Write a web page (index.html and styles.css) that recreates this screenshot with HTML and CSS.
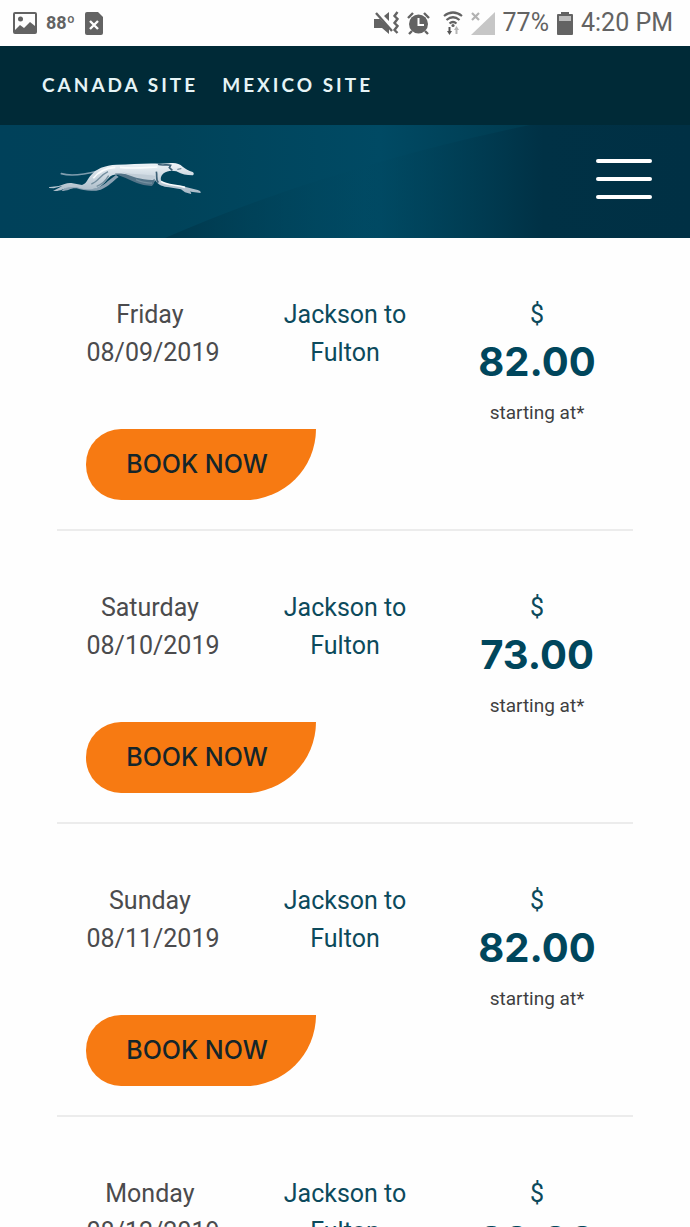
FILE: index.html
```html
<!DOCTYPE html>
<html lang="en">
<head>
<meta charset="utf-8">
<meta name="viewport" content="width=device-width, initial-scale=1">
<title>Fares from Jackson to Fulton</title>
<link rel="stylesheet" href="styles.css">
</head>
<body>
<div class="status">
  <div class="status-group">
    <svg class="icon-picture" width="24" height="22" viewBox="0 0 24 22" aria-hidden="true"><path fill="#636363" fill-rule="evenodd" d="M2 0h20q2 0 2 2v18q0 2-2 2H2q-2 0-2-2V2Q0 0 2 0zM2 2v16l5-5 4 3 6-6 5 4V2z"/><circle cx="7.500" cy="7" r="2.500" fill="#636363"/></svg>
    <span class="temperature">88º</span>
    <svg width="18" height="23" viewBox="0 0 18 23" aria-hidden="true"><path fill="#636363" d="M2 0h11l5 5v16q0 2-2 2H2q-2 0-2-2V2Q0 0 2 0z"/><path d="M5 9l8 8m0-8l-8 8" stroke="#fff" stroke-width="2.400"/></svg>
  </div>
  <div class="status-group status-right">
    <svg width="25" height="24" viewBox="0 0 25 24" aria-hidden="true"><path fill="#636363" d="M0 8h6l9 9v6l-7-6H0zM10 5l5-4v9z"/><path d="M2 2l16 18" stroke="#636363" stroke-width="2.400"/><path d="M23.500 1l-3 4 3 3-3 4 3 3-3 4 3 3" fill="none" stroke="#636363" stroke-width="2.400"/></svg>
    <svg class="icon-alarm" width="23" height="23" viewBox="0 0 23 23" aria-hidden="true"><circle cx="11.500" cy="12" r="9.500" fill="#636363"/><path d="M1 6l5-5M22 6l-5-5M5 19l-3 3M18 19l3 3" stroke="#636363" stroke-width="2.400"/><path d="M11.500 6v7H17" fill="none" stroke="#fff" stroke-width="2"/></svg>
    <svg class="icon-wifi" width="20" height="24" viewBox="0 0 20 24" aria-hidden="true"><g fill="none" stroke="#636363" stroke-width="2.200"><path d="M1 5q9-7 18 0M3.500 9q6.500-5.500 13 0M6.500 12.500q3.500-3 7 0"/></g><circle cx="10" cy="14.500" r="1.600" fill="#636363"/><path fill="#555" d="M5.500 16h2v4H9l-2.500 4L4 20h1.500z"/><path fill="#b5b5b5" d="M12.500 23h2v-4H16l-2.500-4-2.500 4h1.500z"/></svg>
    <svg class="icon-signal" width="24" height="23" viewBox="0 0 24 23" aria-hidden="true"><path fill="#c6c6c6" d="M24 0v23H0z"/><path d="M1 1l7 7m0-7L1 8" stroke="#b2b2b2" stroke-width="2.200"/></svg>
    <span class="status-text">77%</span>
    <svg width="16" height="23" viewBox="0 0 16 23" aria-hidden="true"><path fill="#636363" d="M4 0h8v2h3q1 0 1 1v19q0 1-1 1H1q-1 0-1-1V3q0-1 1-1h3z"/><path fill="#bdbdbd" d="M2 4h12v5H2z"/></svg>
    <span class="status-text">4:20 PM</span>
  </div>
</div>
<nav class="sites" aria-label="Country sites">
  <a href="#canada">CANADA SITE</a>
  <a href="#mexico">MEXICO SITE</a>
</nav>
<header class="masthead">
  <svg class="masthead-art" viewBox="0 0 690 112" preserveAspectRatio="none" aria-hidden="true">
    <defs>
      <linearGradient id="sweep"><stop offset="0" stop-color="#00374b" stop-opacity=".9"/><stop offset=".38" stop-color="#004962" stop-opacity=".2"/><stop offset=".72" stop-color="#003145"/><stop offset="1" stop-color="#003044"/></linearGradient>
    </defs>
    <path fill="url(#sweep)" d="M165 112C270 66 400 27 530 0H690V112z"/>
  </svg>
  <a class="logo" href="#home" aria-label="Home">
    <svg width="152" height="36" viewBox="25 30 456 108" aria-hidden="true">
      <defs>
        <linearGradient id="coat" gradientUnits="userSpaceOnUse" x1="0" y1="38" x2="0" y2="125"><stop offset="0" stop-color="#eef3f7"/><stop offset=".35" stop-color="#d3dde5"/><stop offset="1" stop-color="#a9bac7"/></linearGradient>
      </defs>
      <path d="M62 68C92 77 130 71 172 60" fill="none" stroke="#7f9dae" stroke-width="5" stroke-linecap="round"/>
      <path fill="#8ba2b3" d="M62 120c12-12 24-18 44-16l30 8c26 4 48-4 66-22l24-18 8 6c-18 12-28 28-54 38-22 6-50 4-72-4-18-2-24 8-46 8z"/>
      <path fill="url(#coat)" d="M28 108l26-3c16-4 26-11 42-8l28 5c14-4 16-16 24-26 18-24 44-33 80-35 46-1 86-5 128-3l28-1c18-3 32 0 42 10 8 7 18 11 30 16 5 3 4 9-1 10-18 0-30-3-48-12-14-4-28-2-38 6-9 8-12 19-4 27 18 10 48 8 70 14l36 9c8 3 11 6 8 9l-28-4-6-3c5 3 8 7 6 10l-18-5-12-9-36-6c-18-2-32-6-42-22-2 6-4 8-8 13-36 0-66-16-84-25-18-4-26-6-36-2-16 8-20 24-38 34-20 10-46 10-68 2l-26 0c-14 4-24 13-46 11l28-15-26 7-22-1z"/>
      <path fill="#547488" d="M222 68c30-2 64 8 104 10l16 6c1 10-4 18-9 21-36-2-56-14-78-24z"/>
      <path fill="#c1cdd7" d="M244 64c34 8 70 5 100 11l-6 12c-34 1-66-10-94-23z"/>
      <path d="M168 106c18-6 28-18 36-32M152 99c20-6 26-26 50-37M286 86c18 8 32 11 48 10" fill="none" stroke="#748f9f" stroke-width="4"/>
      <path d="M158 82c16-22 38-31 66-33M238 49c36 5 72 1 112-1M361 91c16 12 46 10 72 18" fill="none" stroke="#fafcfd" stroke-width="5"/>
      <path d="M352 40c14 5 26-1 38 3l-4 7 9 8M347 62c3 13-2 25 6 33" fill="none" stroke="#3d6076" stroke-width="5"/>
      <path d="M410 55l12-2" stroke="#526f82" stroke-width="3"/>
    </svg>
  </a>
  <button class="menu" type="button" aria-label="Open menu"><span></span><span></span><span></span></button>
</header>
<main class="fares">
  <ul class="fare-list">
    <li class="fare">
      <div class="fare-info">
        <div class="date">Friday&nbsp;<br>08/09/2019</div>
        <div class="route">Jackson to Fulton</div>
        <div class="price"><span class="currency">$</span><strong>82.00</strong><small>starting at*</small></div>
      </div>
      <button class="book" type="button">BOOK NOW</button>
    </li>
    <li class="fare">
      <div class="fare-info">
        <div class="date">Saturday&nbsp;<br>08/10/2019</div>
        <div class="route">Jackson to Fulton</div>
        <div class="price"><span class="currency">$</span><strong>73.00</strong><small>starting at*</small></div>
      </div>
      <button class="book" type="button">BOOK NOW</button>
    </li>
    <li class="fare">
      <div class="fare-info">
        <div class="date">Sunday&nbsp;<br>08/11/2019</div>
        <div class="route">Jackson to Fulton</div>
        <div class="price"><span class="currency">$</span><strong>82.00</strong><small>starting at*</small></div>
      </div>
      <button class="book" type="button">BOOK NOW</button>
    </li>
    <li class="fare">
      <div class="fare-info">
        <div class="date">Monday&nbsp;<br>08/12/2019</div>
        <div class="route">Jackson to Fulton</div>
        <div class="price"><span class="currency">$</span><strong>82.00</strong><small>starting at*</small></div>
      </div>
      <button class="book" type="button">BOOK NOW</button>
    </li>
  </ul>
</main>
</body>
</html>
```

FILE: styles.css
```css
* { box-sizing: border-box; }

body {
  display: flex;
  flex-direction: column;
  height: 100vh;
  margin: 0;
  background: #fefefe;
  color: #4b4b4d;
  font-family: Roboto, "Liberation Sans", sans-serif;
  font-size: 25px;
  line-height: 38px;
}

svg { display: block; flex: none; }

.status {
  display: flex;
  flex: none;
  align-items: center;
  justify-content: space-between;
  height: 46px;
  padding: 0 17px 0 13px;
  color: #636363;
}

.status-group { display: flex; align-items: center; gap: 8px; }
.temperature { margin: 0 2px 0 1px; font-size: 18px; font-weight: 700; }
.icon-wifi { margin-left: 5px; }
.status-text { font-size: 25px; white-space: nowrap; }

.sites {
  display: flex;
  flex: none;
  align-items: center;
  gap: 24px;
  height: 79px;
  padding: 0 42px 2px;
  background: #002a37;
}

.sites a {
  color: #e6f4f6;
  font-family: Lato, "Open Sans", sans-serif;
  font-size: 19px;
  font-weight: 700;
  letter-spacing: 3px;
  line-height: 24px;
  text-decoration: none;
}

.masthead {
  position: relative;
  display: flex;
  flex: none;
  align-items: center;
  justify-content: space-between;
  height: 113px;
  padding: 0 38px 6px 49px;
  background: linear-gradient(90deg, #00415a, #00435a 25%, #004a64 55%, #003c51 75%, #003246);
}

.masthead-art { position: absolute; inset: 0; width: 100%; height: 100%; }
.logo { position: relative; }

.menu {
  position: relative;
  display: flex;
  flex-direction: column;
  justify-content: space-between;
  width: 56px;
  height: 40px;
  padding: 0;
  border: 0;
  background: none;
}

.menu span { height: 4px; border-radius: 2px; background: #fff; }

.fares {
  flex: 1;
  min-height: 0;
  padding: 0 57px;
  overflow-y: auto;
  scrollbar-width: none;
}

.fare-list { margin: 0; padding: 0; list-style: none; }
.fare { padding: 58px 0 29px; border-bottom: 2px solid #ececec; }

.fare-info {
  display: grid;
  grid-template-columns: repeat(3, 1fr);
  margin-bottom: 4px;
  text-align: center;
}

.route { padding: 0 28px; color: #0c4a5c; }
.price { display: flex; flex-direction: column; }
.currency { color: #0c4a5c; }

.price strong {
  color: #00465c;
  font-family: Inter, "Open Sans", sans-serif;
  font-size: 40px;
  font-weight: 700;
  line-height: 56px;
}

.price small { margin-top: 11px; font-size: 19px; line-height: 24px; color: #3f3f41; }

.book {
  display: block;
  width: 230px;
  height: 71px;
  margin-left: 29px;
  padding: 0 8px 2px 0;
  border: 0;
  border-radius: 35px 0 71px 35px;
  background: #f77a12;
  color: #14252a;
  font-family: Inter, "Open Sans", sans-serif;
  font-size: 25px;
  font-weight: 500;
}
```
